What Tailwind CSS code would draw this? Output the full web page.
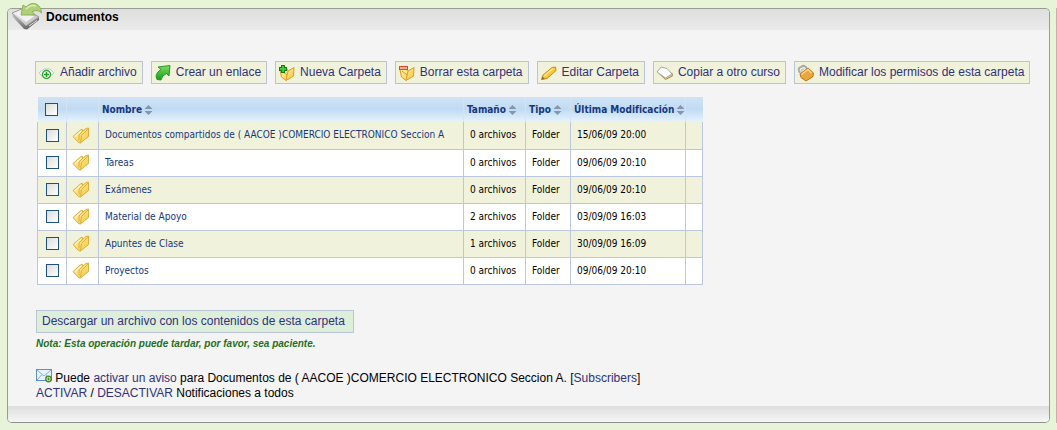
<!DOCTYPE html>
<html lang="es">
<head>
  <meta charset="UTF-8" />
  <meta name="viewport" content="width=device-width, initial-scale=1.0"/>
  <title>Documentos</title>
  <script src="https://cdn.jsdelivr.net/npm/@tailwindcss/browser@4"></script>
</head>
<body class="bg-[#e7f4d7] text-black font-['Liberation_Sans',Arial,sans-serif] text-[12px] leading-[15px]">

  <!-- Shared icon shapes -->
  <svg width="0" height="0" class="absolute" aria-hidden="true">
    <defs>
      <linearGradient id="gold" x1="0" y1="0" x2="1" y2="1">
        <stop offset="0" stop-color="#fff7b8"/><stop offset="1" stop-color="#f6c63c"/>
      </linearGradient>
      <linearGradient id="leaf" x1="0" y1="0" x2="0" y2="1">
        <stop offset="0" stop-color="#7be05a"/><stop offset="1" stop-color="#169a16"/>
      </linearGradient>
      <linearGradient id="steel" x1="0" y1="0" x2="1" y2="1">
        <stop offset="0" stop-color="#fafafa"/><stop offset="1" stop-color="#b4b4b4"/>
      </linearGradient>
      <linearGradient id="side" x1="0" y1="0" x2="1" y2="1">
        <stop offset="0" stop-color="#c8c8c8"/><stop offset="1" stop-color="#4c4c4c"/>
      </linearGradient>
      <symbol id="folder" viewBox="0 0 18 17">
        <path d="M1 9.500 L9 2.500 L10.500 2.500 L10.500 4.500 L14 1.500 L16.500 1 L16.500 9.500 L8.500 16 L6.500 15.500 Z" fill="url(#gold)" stroke="#dcae3c" stroke-width="1" stroke-linejoin="round"/>
        <path d="M10.500 4.500 L7 8 L7 13.500 M8.500 15.500 L9.500 8.500 L16 2" fill="none" stroke="#dcae3c" stroke-width="1"/>
        <path d="M3 9.500 L9 4" fill="none" stroke="#fffbe0" stroke-width="1"/>
      </symbol>
      <symbol id="box" viewBox="0 0 18 18">
        <path d="M2 6 L8 3 L10 7 L16 3.500 L15.500 12 L8 16.500 L3.500 13 Z" fill="url(#gold)" stroke="#dc9c20" stroke-width="1" stroke-linejoin="round"/>
        <path d="M10 7 L8 16 M4 7 L9 11" fill="none" stroke="#dc9c20" stroke-width="1"/>
      </symbol>
      <symbol id="sort" viewBox="0 0 8 10">
        <path d="M4 0 L8 4 H0 Z M0 6 H8 L4 10 Z" fill="#8496a8"/>
      </symbol>
    </defs>
  </svg>

  <div class="flex gap-[6px] pt-2 pl-[7px] pb-[7px] overflow-hidden">

    <!-- Documents panel -->
    <main class="flex-1 min-w-0 relative rounded-[5px] border border-[#999b95] border-b-[#8f918c] bg-[#f4f4f4]">
      <header class="h-[21px] pl-[38px] pt-px rounded-t-[4px] bg-linear-to-b from-[#dedede] to-[#ebebeb]">
        <svg class="absolute left-[3px] -top-[8px]" width="32" height="30" viewBox="0 0 32 30" aria-hidden="true">
          <path d="M1 12 L15 24 L28 16 L28 19 L16 28.500 L13 28 L2 16 Z" fill="url(#side)"/>
          <path d="M1 12 L13 7 L28 16 L15 25 Z" fill="url(#steel)" stroke="#9a9a9a" stroke-width="1" stroke-linejoin="round"/>
          <path d="M5 12.500 L13 9 L23 15.500 L15 21 Z" fill="#f2f2f2"/>
          <path d="M18 25 L26 19.500" stroke="#e0e0e0" stroke-width="1"/>
          <path d="M12 4 L15 6 Q20 1 25 3 Q30 5 30.500 12 Q27 8 21 10.500 L24 14 L10 14 Z" fill="#b0cf79" stroke="#8db05c" stroke-width="1" stroke-linejoin="round"/>
          <path d="M15 8 Q20 3 25 5" fill="none" stroke="#dcedb6" stroke-width="1.500"/>
        </svg>
        <h1 class="font-bold text-[12px]">Documentos</h1>
      </header>

      <div class="px-[27px] pt-[31px] pb-[5px]">

        <!-- Toolbar -->
        <nav class="flex gap-2 -mr-4 whitespace-nowrap text-[#31317b]">
          <a href="#" class="flex items-center gap-1 h-[23px] pl-[2px] pr-[5px] bg-[#f0f2dc] border border-[#b9c5d4]">
            <svg width="18" height="18" viewBox="0 0 18 18" aria-hidden="true">
              <path d="M1 9 L6 5 H12 L16 9 L11 13 H5 Z" fill="#f4f9ff" stroke="#b4cbe0"/>
              <circle cx="8.500" cy="10.500" r="4" fill="#fff" stroke="#2fa72f" stroke-width="1.500"/>
              <path d="M8.500 8 V13 M6 10.500 H11" stroke="#1f9c1f" stroke-width="1.500"/>
            </svg>
            Añadir archivo</a>
          <a href="#" class="flex items-center gap-1 h-[23px] pl-[2px] pr-[5px] bg-[#f0f2dc] border border-[#b9c5d4]">
            <svg width="18" height="18" viewBox="0 0 18 18" aria-hidden="true">
              <path d="M4 3 L16 1.500 L15 12 L12.500 9.500 Q8 11 7 16 L3 15.500 Q0 10 7 5.500 Z" fill="url(#leaf)" stroke="#22962a" stroke-linejoin="round"/>
            </svg>
            Crear un enlace</a>
          <a href="#" class="flex items-center gap-1 h-[23px] pl-[2px] pr-[5px] bg-[#f0f2dc] border border-[#b9c5d4]">
            <svg width="18" height="18" viewBox="0 0 18 18" aria-hidden="true">
              <use href="#box"/>
              <path d="M5 1 V9 M1 5 H9" stroke="#157a15" stroke-width="4"/>
              <path d="M5 2 V8 M2 5 H8" stroke="#45c93c" stroke-width="2"/>
            </svg>
            Nueva Carpeta</a>
          <a href="#" class="flex items-center gap-1 h-[23px] pl-[2px] pr-[5px] bg-[#f0f2dc] border border-[#b9c5d4]">
            <svg width="18" height="18" viewBox="0 0 18 18" aria-hidden="true">
              <use href="#box"/>
              <rect x="1.500" y="2.500" width="8" height="3" fill="#f5b09a" stroke="#d8492f"/>
            </svg>
            Borrar esta carpeta</a>
          <a href="#" class="flex items-center gap-1 h-[23px] pl-[2px] pr-[5px] bg-[#f0f2dc] border border-[#b9c5d4]">
            <svg width="18" height="18" viewBox="0 0 18 18" aria-hidden="true">
              <path d="M1.500 15.500 L3 11 L12 3.500 L15.500 3 L16 6.500 L7 14.500 Z" fill="#fbc733" stroke="#c98a1b" stroke-linejoin="round"/>
              <path d="M4 12 L13 4.500" stroke="#ffe98c" stroke-width="1.500"/>
              <path d="M1.500 15.500 L2.500 12.500 L5 15 Z" fill="#8a6a3a"/>
            </svg>
            Editar Carpeta</a>
          <a href="#" class="flex items-center gap-1 h-[23px] pl-[2px] pr-[5px] bg-[#f0f2dc] border border-[#b9c5d4]">
            <svg width="18" height="18" viewBox="0 0 18 18" aria-hidden="true">
              <path d="M3 8 L3.500 10 L9.500 15.500 L16.500 12 L16 9 L9 13 Z" fill="#e2c78c" stroke="#b08f52" stroke-linejoin="round"/>
              <path d="M1 8 L5 3 L11 4.500 L16 10 L9.500 14 Z" fill="#fff" stroke="#a2a4a4" stroke-linejoin="round"/>
            </svg>
            Copiar a otro curso</a>
          <a href="#" class="flex items-center gap-1 h-[23px] pl-[2px] pr-[5px] bg-[#f0f2dc] border border-[#b9c5d4]">
            <svg width="18" height="18" viewBox="0 0 18 18" aria-hidden="true">
              <path d="M3 9 Q0 4 4 3 Q8 0 10 5" fill="none" stroke="#a9abad" stroke-width="2"/>
              <path d="M4 9 Q4 5 7 5" fill="none" stroke="#c5c7c9" stroke-width="1.500"/>
              <path d="M3 10 L11 4 L16.500 9 L16 12.500 L9 17 L4 13.500 Z" fill="#e9a63a" stroke="#b8741c" stroke-linejoin="round"/>
              <path d="M4.500 10.500 L11 5.500 L14.500 9" fill="none" stroke="#fbd588" stroke-width="1.500"/>
            </svg>
            Modificar los permisos de esta carpeta</a>
        </nav>

        <!-- Folder list -->
        <table class="mt-[13px] ml-[2px] w-[665px] table-fixed border-collapse font-['DejaVu_Sans_Condensed','DejaVu_Sans',sans-serif] text-[10px] leading-[14px] whitespace-nowrap text-black">
          <colgroup>
            <col class="w-[29px]"><col class="w-[32px]"><col class="w-[365px]"><col class="w-[62px]"><col class="w-[45px]"><col class="w-[115px]"><col class="w-[17px]">
          </colgroup>
          <thead>
            <tr class="h-[25px] bg-linear-to-b from-[#cfe3f6] via-[#c0dbf3] to-[#e6f3fe] text-left text-[#16387c]">
              <th class="border-r border-[#d3e3f3]"><input type="checkbox" aria-label="Seleccionar todo" class="appearance-none block mx-auto size-[13px] border border-[#1c5180] bg-linear-to-br from-[#dcdcd7] to-white"></th>
              <th class="border-r border-[#d3e3f3]"></th>
              <th class="border-r border-[#d3e3f3] pl-[3px]"><button type="button" class="flex items-center gap-[2px]">Nombre <svg width="9" height="10" viewBox="0 0 8 10" aria-hidden="true"><use href="#sort"/></svg></button></th>
              <th class="border-r border-[#d3e3f3] pl-[3px]"><button type="button" class="flex items-center gap-[2px]">Tamaño <svg width="9" height="10" viewBox="0 0 8 10" aria-hidden="true"><use href="#sort"/></svg></button></th>
              <th class="border-r border-[#d3e3f3] pl-[3px]"><button type="button" class="flex items-center gap-[2px]">Tipo <svg width="9" height="10" viewBox="0 0 8 10" aria-hidden="true"><use href="#sort"/></svg></button></th>
              <th class="border-r border-[#d3e3f3] pl-[3px]"><button type="button" class="flex items-center gap-[2px]">Última Modificación <svg width="9" height="10" viewBox="0 0 8 10" aria-hidden="true"><use href="#sort"/></svg></button></th>
              <th></th>
            </tr>
          </thead>
          <tbody id="folderRows"></tbody>
        </table>

        <a href="#" class="inline-block mt-[25px] ml-[1px] pl-[5px] pr-2 py-[3px] bg-[#ddefdb] border border-[#b9c5d4] text-[#31317b]">Descargar un archivo con los contenidos de esta carpeta</a>
        <p class="mt-[5px] ml-[1px] text-[10px] leading-[12px] font-bold italic text-[#1f701f]">Nota: Esta operación puede tardar, por favor, sea paciente.</p>

        <p class="mt-[19px] ml-[1px]">
          <svg class="inline-block align-[-1px]" width="16" height="14" viewBox="0 0 16 14" aria-hidden="true">
            <rect x=".5" y=".5" width="15" height="11" fill="#e9f2fd" stroke="#5d8fcb"/>
            <path d="M1 1 L8 7 L15 1 M1 11 L6 5.500 M15 11 L10 5.500" fill="none" stroke="#86aee0"/>
            <circle cx="12.500" cy="10" r="2.700" fill="#fff" stroke="#4c8a2c" stroke-width="1.500"/>
            <path d="M12.500 8.500 V11.500 M11 10 H14" stroke="#4c8a2c"/>
          </svg>
          Puede <a href="#" class="text-[#31317b]">activar un aviso</a> para Documentos de ( AACOE )COMERCIO ELECTRONICO Seccion A. [<a href="#" class="text-[#31317b]">Subscribers</a>]<br>
          <a href="#" class="text-[#31317b]">ACTIVAR</a> / <a href="#" class="text-[#31317b]">DESACTIVAR</a> Notificaciones a todos
        </p>
      </div>

      <footer class="h-4 rounded-b-[4px] bg-linear-to-b from-[#dedede] to-[#f6f6f6]"></footer>
    </main>

    <!-- Edge of the next panel -->
    <aside class="w-px bg-[#b5b8b0]"></aside>
  </div>

  <script>
    const folders = [
      ['Documentos compartidos de ( AACOE )COMERCIO ELECTRONICO Seccion A', '0 archivos', '15/06/09 20:00'],
      ['Tareas', '0 archivos', '09/06/09 20:10'],
      ['Exámenes', '0 archivos', '09/06/09 20:10'],
      ['Material de Apoyo', '2 archivos', '03/09/09 16:03'],
      ['Apuntes de Clase', '1 archivos', '30/09/09 16:09'],
      ['Proyectos', '0 archivos', '09/06/09 20:10']
    ];

    document.getElementById('folderRows').innerHTML = folders.map(([name, size, date]) => `
      <tr class="h-[27px] odd:bg-[#f0f2dc] even:bg-white">
        <td class="border border-t-0 border-[#bcc6dc]"><input type="checkbox" aria-label="${name}" class="appearance-none block mx-auto size-[13px] border border-[#1c5180] bg-linear-to-br from-[#dcdcd7] to-white"></td>
        <td class="border border-t-0 border-[#bcc6dc] pl-[5px]"><svg width="18" height="17" viewBox="0 0 18 17" aria-hidden="true"><use href="#folder"/></svg></td>
        <td class="border border-t-0 border-[#bcc6dc] pl-[6px]"><a href="#" class="text-[#16387c]">${name}</a></td>
        <td class="border border-t-0 border-[#bcc6dc] pl-[6px]">${size}</td>
        <td class="border border-t-0 border-[#bcc6dc] pl-[6px]">Folder</td>
        <td class="border border-t-0 border-[#bcc6dc] pl-[6px]">${date}</td>
        <td class="border border-t-0 border-[#bcc6dc]"></td>
      </tr>`).join('');
  </script>
</body>
</html>
